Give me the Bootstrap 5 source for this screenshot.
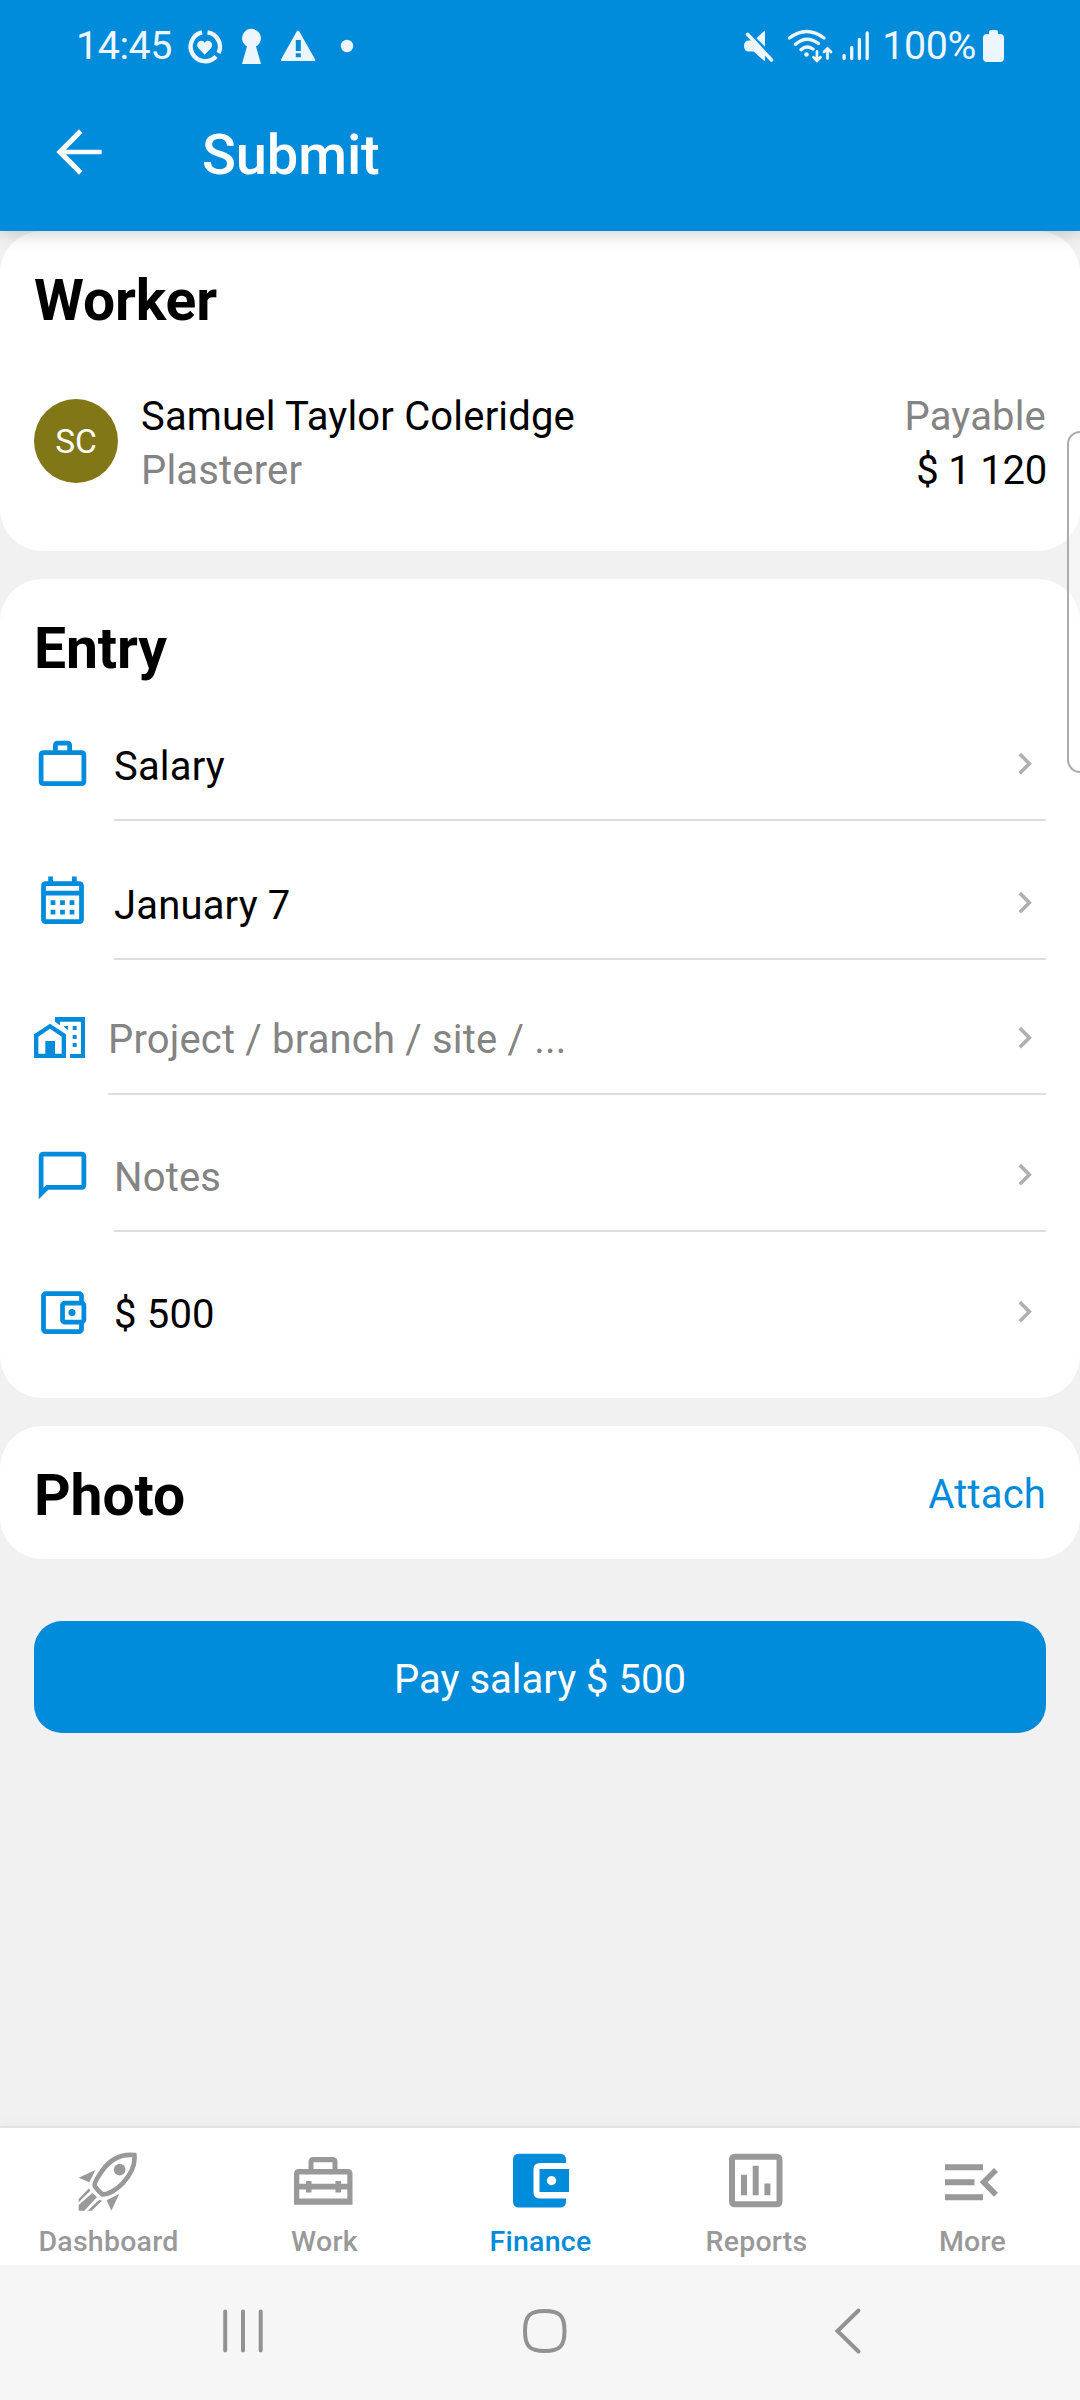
<!DOCTYPE html>
<html lang="en">
<head>
<meta charset="utf-8">
<meta name="viewport" content="width=device-width, initial-scale=1">
<title>Submit</title>
<link href="https://cdn.jsdelivr.net/npm/bootstrap@5.3.0/dist/css/bootstrap.min.css" rel="stylesheet">
<style>
:root { --brand: #018bdb; --page: #f1f1f1; --muted: #848484; --tab: #999; }
body { width: 1080px; height: 2400px; background: var(--page); color: #000; font: 400 40px/54px Roboto, sans-serif; letter-spacing: .17px; overflow: hidden; }
svg { display: block; flex: none; }
.top-area { height: 231px; background: var(--brand); box-shadow: 0 2px 18px rgba(0,0,0,.2); z-index: 2; }
.status-line { height: 75px; padding: 17px 76px 0 76px; color: #eef6fd; font-size: 39.4px; letter-spacing: -.4px; }
.status-left { margin-left: 12.5px; }
.status-pct { margin: 0 7px 0 11px; }
.toolbar { height: 156px; padding-left: 44.5px; padding-bottom: 2px; }
.toolbar h1 { color: #fff; font-size: 56px; font-weight: 500; line-height: 60px; letter-spacing: -.1px; padding-top: 5px; margin: 0 0 0 89.5px; }
.panel { background: #fff; border-radius: 42px; padding: 0 34px; }
.panel + .panel { margin-top: 28px; }
.panel h2 { font-size: 57px; font-weight: 700; line-height: 60px; letter-spacing: -.12px; padding-top: 40px; margin: 0; }
.p-worker { height: 320px; }
.p-entry { height: 819px; }
.p-photo { height: 133px; }
.p-photo h2 { padding-top: 6px; }
.person { margin-top: 59px; }
.avatar { width: 84px; height: 84px; margin: 0 23px 7px 0; background: #827717; color: #fff; font-size: 33.5px; letter-spacing: 0; padding-top: 3px; }
.amount { letter-spacing: -.2px; margin-right: -1px; }
.soft { color: var(--muted); }
.entry-row { height: 137px; }
.entry-row:nth-child(1) { height: 142px; }
.entry-row:nth-child(2) { height: 139px; }
.entry-row:nth-child(3) { height: 135px; }
.entry-row .ico { margin-bottom: 28px; fill: var(--brand); }
.entry-row:nth-child(2) .ico, .entry-row:nth-child(3) .ico { margin-bottom: 29px; }
.entry-row .body-line { height: 108px; margin-left: 23px; padding-top: 3px; border-bottom: 2px solid #dedede; box-sizing: content-box; }
.entry-row .body-line span { padding-top: 4px; }
.entry-row:nth-child(3) .body-line span { padding-top: 2px; }
.entry-row:last-child .body-line { border-color: transparent; }
.entry-row .chev { fill: #b0b0b0; margin-top: -2px; }
.attach { color: var(--brand); text-decoration: none; padding-top: 4px; }
.pay { --bs-btn-bg: var(--brand); --bs-btn-color: #fff; --bs-btn-border-width: 0; height: 112px; margin: 62px 34px 0; border-radius: 28px; font-size: 40px; line-height: 54px; padding: 5px 0 0; }
.tabs { height: 139px; background: #fff; border-top: 2px solid #e2e2e2; box-shadow: 0 -2px 14px rgba(0,0,0,.04); }
.tabs a { width: 216px; color: var(--tab); text-decoration: none; font-size: 28.5px; font-weight: 500; line-height: 36px; letter-spacing: .25px; padding-top: 23px; }
.tabs a span { padding-left: 1px; }
.tabs a svg { fill: currentColor; margin-bottom: 13px; }
.tabs a.active { color: var(--brand); }
.sysbar { height: 135px; background: #f6f6f6; }
.edge-handle { right: -3px; top: 431px; width: 16px; height: 342px; border: 2px solid #acacac; border-right: 0; border-radius: 13px 0 0 13px; background: rgba(255,255,255,.3); z-index: 3; }
</style>
</head>
<body class="position-relative d-flex flex-column">
<header class="top-area position-relative">
  <div class="status-line d-flex align-items-center justify-content-between">
    <div class="d-flex align-items-center">
      <span>14:45</span>
      <svg class="status-left" width="180" height="40" viewBox="185 26 180 40" fill="#eef6fd">
        <g fill="none" stroke="#eef6fd" stroke-width="4.4">
          <path d="M202 32.4A14.6 14.6 0 1 0 216 56.5"/><path d="M207.5 32.4A14.6 14.6 0 0 1 218.6 53"/>
        </g>
        <path d="M204.7 54.8l-6-6.2c-4.6-5.2 2.6-10.8 6-5.9 3.400-4.900 10.600.7 6 5.900z"/>
        <path d="M247 46.500a9.400 9.400 0 1 1 9 0L261 64H242z"/>
        <path fill-rule="evenodd" d="M298 30.800a1.500 1.500 0 0 1 1.300.8L315.200 59.500q.4 1.500-1 1.500H282q-1.400 0-1-1.500L296.700 31.600a1.500 1.500 0 0 1 1.300-.8zM295.800 40v11h5V40zM295.800 53.300v4h5v-4z"/>
        <circle cx="347" cy="46" r="6.200"/>
      </svg>
    </div>
    <div class="d-flex align-items-center">
      <svg width="130" height="40" viewBox="740 26 130 40" fill="#eef6fd">
        <path d="M743 46q0-5.500 5-5.500h3.500L764 53.500V60.500q0 1-1 .3L752.500 51.500H748q-5 0-5-5.500zM755.500 38.300L762.500 31.500q1.500-1 1.500.5V46.700z"/>
        <path d="M746.500 34.300L770.500 60" stroke="#eef6fd" stroke-width="3.600" stroke-linecap="round"/>
        <g fill="none" stroke="#eef6fd" stroke-width="3.300" stroke-linecap="round">
          <path d="M788.500 38Q805.500 25 823 38M794.500 44.300Q805.500 34.500 817.500 43.500M800 49.700Q805.500 44.600 812 49"/>
          <path stroke-width="2.800" d="M816 51.500V60M812.500 57.200l3.500 3.500 3.500-3.500M826.500 58.500V49M823 52l3.500-3.500 3.500 3.500"/>
          <path d="M843.100 55.500v3M850.700 47.500v11M858.400 39.500v19M866.200 33v25.500"/>
        </g>
        <circle cx="805.500" cy="54.500" r="2.300"/>
      </svg>
      <span class="status-pct">100%</span>
      <svg width="21" height="33" viewBox="0 0 21 33" fill="#eef6fd"><path d="M6 2q0-2 2-2h5q2 0 2 2v2h2q4 0 4 4v20q0 4-4 4H4q-4 0-4-4V8q0-4 4-4h2z"/></svg>
    </div>
  </div>
  <div class="toolbar d-flex align-items-center">
    <svg width="68" height="68" viewBox="0 0 24 24" fill="#fff"><path d="M20 11.200H7.400l5.800-5.900L12 4 4 12l8 8 1.200-1.300-5.800-5.900H20z"/></svg>
    <h1>Submit</h1>
  </div>
</header>

<main class="flex-grow-1 d-flex flex-column">
  <section class="panel p-worker">
    <h2>Worker</h2>
    <div class="person d-flex align-items-center">
      <div class="avatar rounded-circle d-flex align-items-center justify-content-center">SC</div>
      <div class="flex-grow-1"><div>Samuel Taylor Coleridge</div><div class="soft">Plasterer</div></div>
      <div class="text-end"><div class="soft">Payable</div><div class="amount">$ 1 120</div></div>
    </div>
  </section>

  <section class="panel p-entry">
    <h2>Entry</h2>
    <div>
      <div class="entry-row d-flex align-items-end">
        <svg class="ico" width="57" height="57" viewBox="0 0 24 24"><path fill-rule="evenodd" d="M8 6V4q0-2 2-2h4q2 0 2 2v2h4q2 0 2 2v11q0 2-2 2H4q-2 0-2-2V8q0-2 2-2zm2 0h4V4h-4zM4 8v11h16V8z"/></svg>
        <div class="body-line flex-grow-1 d-flex align-items-center justify-content-between"><span>Salary</span><svg class="chev" width="43.400" height="43.400" viewBox="0 0 24 24"><path d="M8.590 16.590L13.170 12 8.590 7.410 10 6l6 6-6 6z"/></svg></div>
      </div>
      <div class="entry-row d-flex align-items-end">
        <svg class="ico" width="57" height="57" viewBox="0 0 24 24"><path fill-rule="evenodd" d="M6 3V1h2v2h8V1h2v2h1q2 0 2 2v14q0 2-2 2H5q-2 0-2-2V5q0-2 2-2zM5 5v2h14V5zM5 9v10h14V9zM7 11h2v2H7zm4 0h2v2h-2zm4 0h2v2h-2zM7 15h2v2H7zm4 0h2v2h-2zm4 0h2v2h-2z"/></svg>
        <div class="body-line flex-grow-1 d-flex align-items-center justify-content-between"><span>January 7</span><svg class="chev" width="43.400" height="43.400" viewBox="0 0 24 24"><path d="M8.590 16.590L13.170 12 8.590 7.410 10 6l6 6-6 6z"/></svg></div>
      </div>
      <div class="entry-row d-flex align-items-end">
        <svg class="ico" width="51" height="57" viewBox="0 -24 153 171"><path fill-rule="evenodd" d="M0 123V52L48 20 96 52V123zM13 110H34V72H63V110H83V59L48 35 13 59zM63 0H153V123H108V111H141V14H78V23H75L63 14zM90 27h12v12L90 30zM116 27h12v12h-12zM116 54h12v12h-12zM116 78h12v12h-12z"/></svg>
        <div class="body-line flex-grow-1 d-flex align-items-center justify-content-between soft"><span>Project / branch / site / ...</span><svg class="chev" width="43.400" height="43.400" viewBox="0 0 24 24"><path d="M8.590 16.590L13.170 12 8.590 7.410 10 6l6 6-6 6z"/></svg></div>
      </div>
      <div class="entry-row d-flex align-items-end">
        <svg class="ico" width="57" height="57" viewBox="0 0 24 24"><path fill-rule="evenodd" d="M20 2H4q-2 0-2 2v18l4-4h14q2 0 2-2V4q0-2-2-2zm0 14H5.200L4 17.200V4h16z"/></svg>
        <div class="body-line flex-grow-1 d-flex align-items-center justify-content-between soft"><span>Notes</span><svg class="chev" width="43.400" height="43.400" viewBox="0 0 24 24"><path d="M8.590 16.590L13.170 12 8.590 7.410 10 6l6 6-6 6z"/></svg></div>
      </div>
      <div class="entry-row d-flex align-items-end">
        <svg class="ico" width="57" height="57" viewBox="0 0 24 24"><path fill-rule="evenodd" d="M21 7.280V5c0-1.100-.9-2-2-2H5c-1.110 0-2 .9-2 2v14c0 1.100.89 2 2 2h14c1.100 0 2-.9 2-2v-2.280c.59-.35 1-.98 1-1.720V9c0-.74-.41-1.370-1-1.720zM20 9v6h-7V9zM5 19V5h14v2h-6c-1.100 0-2 .9-2 2v6c0 1.100.9 2 2 2h6v2z"/><circle cx="16" cy="12" r="1.500"/></svg>
        <div class="body-line flex-grow-1 d-flex align-items-center justify-content-between"><span>$ 500</span><svg class="chev" width="43.400" height="43.400" viewBox="0 0 24 24"><path d="M8.590 16.590L13.170 12 8.590 7.410 10 6l6 6-6 6z"/></svg></div>
      </div>
    </div>
  </section>

  <section class="panel p-photo d-flex align-items-center justify-content-between">
    <h2>Photo</h2>
    <a class="attach" href="#">Attach</a>
  </section>

  <button type="button" class="btn pay">Pay salary $ 500</button>
</main>

<nav class="tabs d-flex">
  <a href="#" class="d-flex flex-column align-items-center">
    <svg width="60" height="60" viewBox="22 30 180 180"><path fill="none" stroke="currentColor" stroke-width="14" d="M191 42C150 38 118 57 97 86C84 104 70 127 72 134Q82 150 95 160C108 162 135 149 156 127C180 101 195 72 191 42Z"/><circle cx="147" cy="86" r="17.500"/><path d="M24 110L74 87 56 124zM108 178L146 158 122 209zM24 174L55 142 59 149 24 184zM24 192L65 156 79 168 41 209H24zM51 209L86 176 94 179 63 209z"/></svg>
    <span>Dashboard</span></a>
  <a href="#" class="d-flex flex-column align-items-center">
    <svg width="60" height="60" viewBox="0 0 60 60"><path fill-rule="evenodd" d="M0 53.700V23q0-5 5-5h9.500V11q0-5 5-5H38.500q5 0 5 5v7H53.500q5 0 5 5V53.700zM19.500 18h19v-6.700h-19zM5.300 23.500v9.200H12V30h5.500v2.700h24V30H47v2.700h6.300V23.500zM5.300 38.500v9H53.300v-9H47v3h-5.500v-3h-24v3H12v-3z"/></svg>
    <span>Work</span></a>
  <a href="#" class="active d-flex flex-column align-items-center">
    <svg width="60" height="60" viewBox="0 0 60 60"><path fill-rule="evenodd" d="M9 2.700H50q6 0 6 6V12H30.500q-7 0-7 6V41.500q0 6 7 6H56v3q0 6-6 6H9q-6 0-6-6V8.700q0-6 6-6zM29.500 18H59V41H29.500zM41.500 25a4.600 4.600 0 1 0 .01 0z"/></svg>
    <span>Finance</span></a>
  <a href="#" class="d-flex flex-column align-items-center">
    <svg width="60" height="60" viewBox="0 0 60 60"><path fill-rule="evenodd" d="M9 2.700H50.500q6 0 6 6v41.500q0 6-6 6H9q-6 0-6-6V8.700q0-6 6-6zM9 8.700V50.200H50.500V8.700zM15 23.700h6v20.500h-6zM26.700 14.700h6v29.500h-6zM38.400 32.500h6v11.700h-6z"/></svg>
    <span>Reports</span></a>
  <a href="#" class="d-flex flex-column align-items-center">
    <svg width="60" height="60" viewBox="0 0 60 60"><path d="M3 13.300H41v6H3zM3 28.300H32.500v6H3zM3 43.300H41v6H3zM52 17l4 4L45.700 31.300 56 41.700l-4 4L37.700 31.300z"/></svg>
    <span>More</span></a>
</nav>
<div class="sysbar">
  <svg width="1080" height="135" viewBox="0 2265 1080 135" fill="none" stroke="#929292" stroke-width="4" stroke-linecap="round">
    <path d="M225.200 2311.500v39M243 2311.500v39M260.700 2311.500v39"/>
    <path d="M544.700 2311C560 2311 564.500 2316 564.500 2331S560 2351 544.700 2351 525 2346 525 2331 529.500 2311 544.700 2311z"/>
    <path d="M858.500 2310.500L837.500 2331l21 20.500"/>
  </svg>
</div>
<div class="edge-handle position-absolute"></div>
<script src="https://cdn.jsdelivr.net/npm/bootstrap@5.3.0/dist/js/bootstrap.bundle.min.js"></script>
</body>
</html>
